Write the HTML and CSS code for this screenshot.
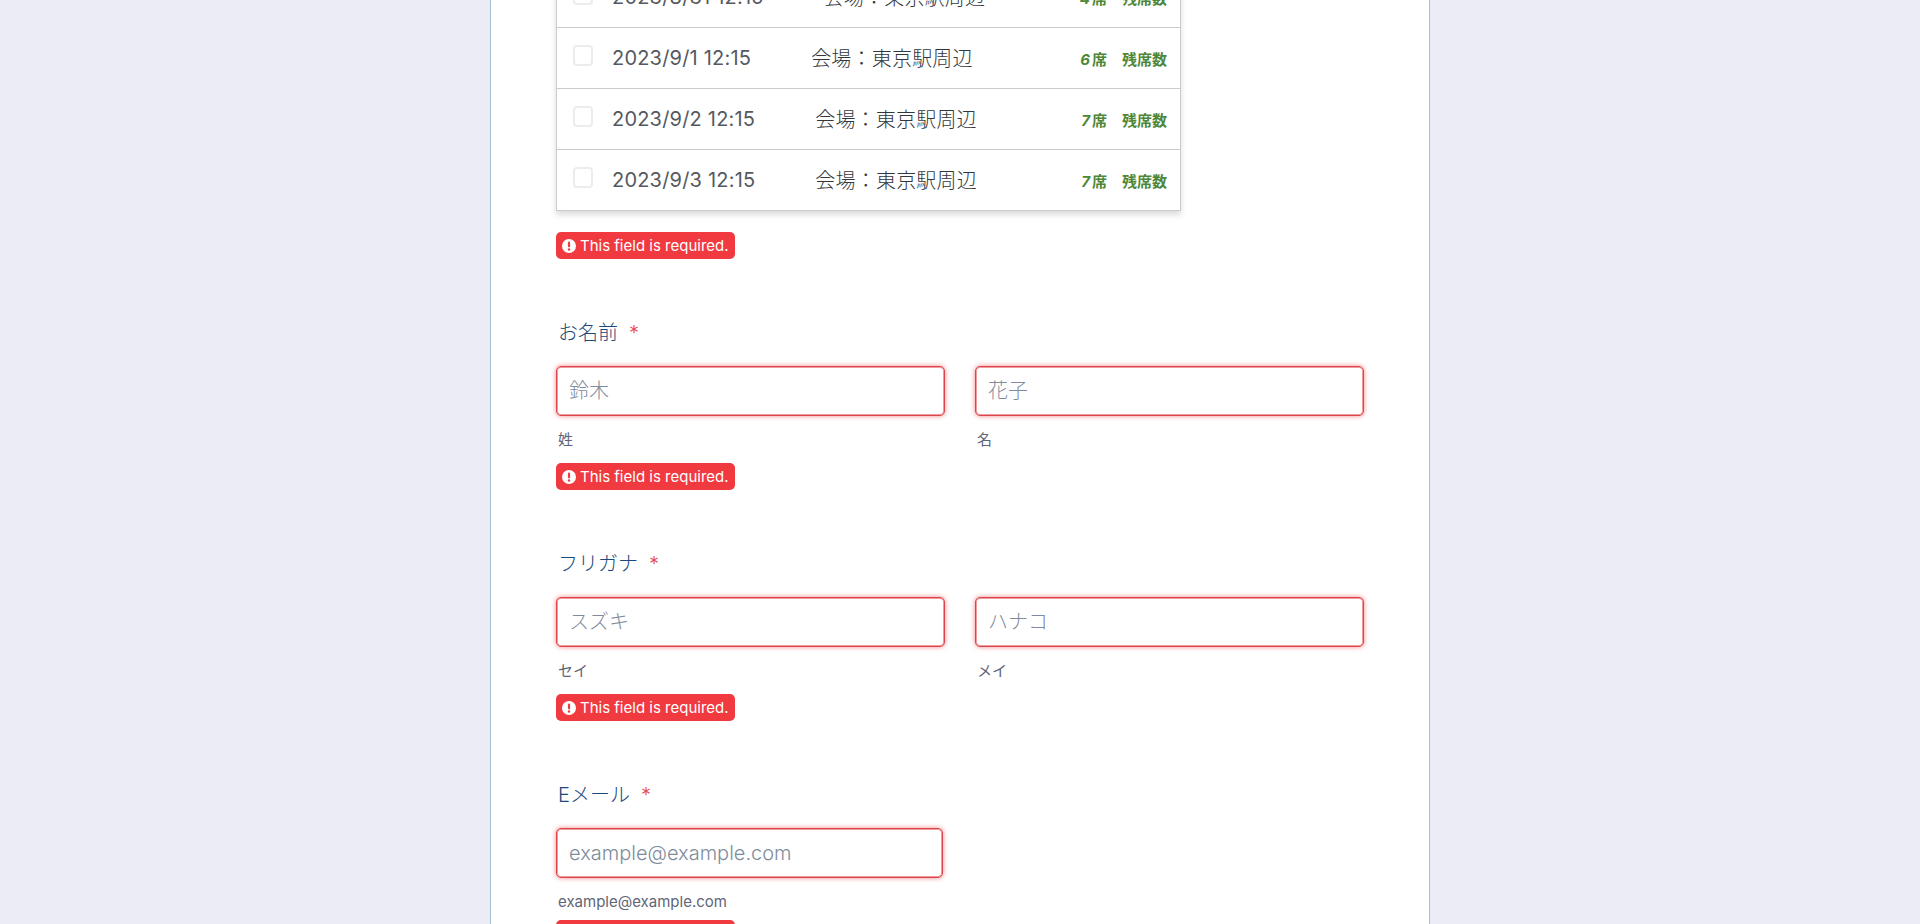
FILE: index.html
```html
<!DOCTYPE html>
<html lang="ja">
<head>
<meta charset="utf-8">
<title>予約フォーム</title>
<link rel="stylesheet" href="styles.css">
</head>
<body>
<main class="card">
  <div class="slots">
    <div class="slot"><span class="check"></span><span class="date">2023/8/31 12:15</span><span class="venue">会場：東京駅周辺</span><span class="seats"><b><i>4</i>席</b><b class="rest">残席数</b></span></div>
    <div class="slot"><span class="check"></span><span class="date">2023/9/1 12:15</span><span class="venue">会場：東京駅周辺</span><span class="seats"><b><i>6</i>席</b><b class="rest">残席数</b></span></div>
    <div class="slot"><span class="check"></span><span class="date">2023/9/2 12:15</span><span class="venue">会場：東京駅周辺</span><span class="seats"><b><i>7</i>席</b><b class="rest">残席数</b></span></div>
    <div class="slot"><span class="check"></span><span class="date">2023/9/3 12:15</span><span class="venue">会場：東京駅周辺</span><span class="seats"><b><i>7</i>席</b><b class="rest">残席数</b></span></div>
  </div>
  <div class="error first"><svg viewBox="0 0 16 16"><circle cx="8" cy="8" r="7" fill="#fff"/><rect x="6.9" y="3.6" width="2.2" height="5.8" rx="1.1" fill="#f03a40"/><circle cx="8" cy="11.5" r="1.2" fill="#f03a40"/></svg>This field is required.</div>

  <section class="field">
    <label class="label">お名前<span class="star">*</span></label>
    <div class="pair">
      <div class="col"><input class="input" placeholder="鈴木"><div class="hint">姓</div></div>
      <div class="col"><input class="input" placeholder="花子"><div class="hint">名</div></div>
    </div>
    <div class="error"><svg viewBox="0 0 16 16"><circle cx="8" cy="8" r="7" fill="#fff"/><rect x="6.9" y="3.6" width="2.2" height="5.8" rx="1.1" fill="#f03a40"/><circle cx="8" cy="11.5" r="1.2" fill="#f03a40"/></svg>This field is required.</div>
  </section>

  <section class="field">
    <label class="label">フリガナ<span class="star">*</span></label>
    <div class="pair">
      <div class="col"><input class="input" placeholder="スズキ"><div class="hint">セイ</div></div>
      <div class="col"><input class="input" placeholder="ハナコ"><div class="hint">メイ</div></div>
    </div>
    <div class="error"><svg viewBox="0 0 16 16"><circle cx="8" cy="8" r="7" fill="#fff"/><rect x="6.9" y="3.6" width="2.2" height="5.8" rx="1.1" fill="#f03a40"/><circle cx="8" cy="11.5" r="1.2" fill="#f03a40"/></svg>This field is required.</div>
  </section>

  <section class="field">
    <label class="label">Eメール<span class="star">*</span></label>
    <div class="single"><input class="input" placeholder="example@example.com"><div class="hint short">example@example.com</div></div>
    <div class="error"><svg viewBox="0 0 16 16"><circle cx="8" cy="8" r="7" fill="#fff"/><rect x="6.9" y="3.6" width="2.2" height="5.8" rx="1.1" fill="#f03a40"/><circle cx="8" cy="11.5" r="1.2" fill="#f03a40"/></svg>This field is required.</div>
  </section>
</main>
</body>
</html>
```
FILE: styles.css
```css
* { box-sizing: border-box; }
html, body { margin: 0; height: 924px; overflow: hidden; }
body {
  background: #ebecf6;
  font-family: Inter, "Noto Sans CJK JP", sans-serif;
  color: #4b5563;
}
.card {
  width: 940px;
  min-height: 1200px;
  margin: 0 auto;
  padding: 0 65px;
  background: #fff;
  border-left: 1px solid #a9bcd0;
  border-right: 1px solid #a9bcd0;
}
.slots {
  width: 625px;
  margin-top: -34px;
  border: 1px solid #c9cbcf;
  border-top: 0;
  box-shadow: 0 4px 6px rgba(0,0,0,.14);
}
.slot {
  display: flex;
  align-items: center;
  height: 61px;
  padding: 0 13px 0 16px;
  border-top: 1px solid #c9cbcf;
}
.check {
  width: 20px;
  height: 21px;
  margin: -6px 19px 0 0;
  border: 2px solid #ececee;
  border-radius: 4px;
}
.date { font-size: 20px; letter-spacing: .2px; color: #55595f; margin-right: 60px; }
.venue { margin-top: -2px; font-size: 20px; font-weight: 300; letter-spacing: .2px; color: #33373d; }
.seats { margin-left: auto; display: flex; gap: 15px; font-size: 15px; color: #4f8738; }
.seats i { font-size: 15px; margin-right: 2px; }
.error {
  display: flex;
  width: fit-content;
  align-items: center;
  height: 27px;
  padding: 0 6px 0 5px;
  border-radius: 5px;
  background: #f03a40;
  color: #fff;
  font-size: 15px;
  line-height: 1;
}
.error svg { width: 16px; height: 16px; margin-right: 3px; }
.error.first { margin-top: 21px; }
.field { margin-top: 56px; }
.label {
  display: block;
  height: 51px;
  padding-left: 2px;
  font-size: 20px;
  font-weight: 300;
  line-height: 37px;
  color: #1a4a7a;
}
.star { margin-left: 11px; color: #e5484d; font-size: 20px; }
.pair { display: flex; gap: 30px; width: 808px; }
.col { flex: 1; }
.single { width: 387px; }
.input {
  display: block;
  width: 100%;
  height: 50px;
  padding: 0 12px;
  border: 1px solid #d9454b;
  border-radius: 5px;
  background: #fff;
  box-shadow: inset 0 0 0 1px rgba(229,72,77,.55), 0 0 5px rgba(240,58,64,.6);
  font: 300 20px Inter, "Noto Sans CJK JP", sans-serif;
  outline: 0;
}
.input::placeholder { color: #7f8c9d; opacity: 1; }
.hint {
  height: 47px;
  padding: 14px 0 0 2px;
  font-size: 15px;
  line-height: 20px;
  color: #5f6577;
}
.hint.short { height: 42px; }
```
